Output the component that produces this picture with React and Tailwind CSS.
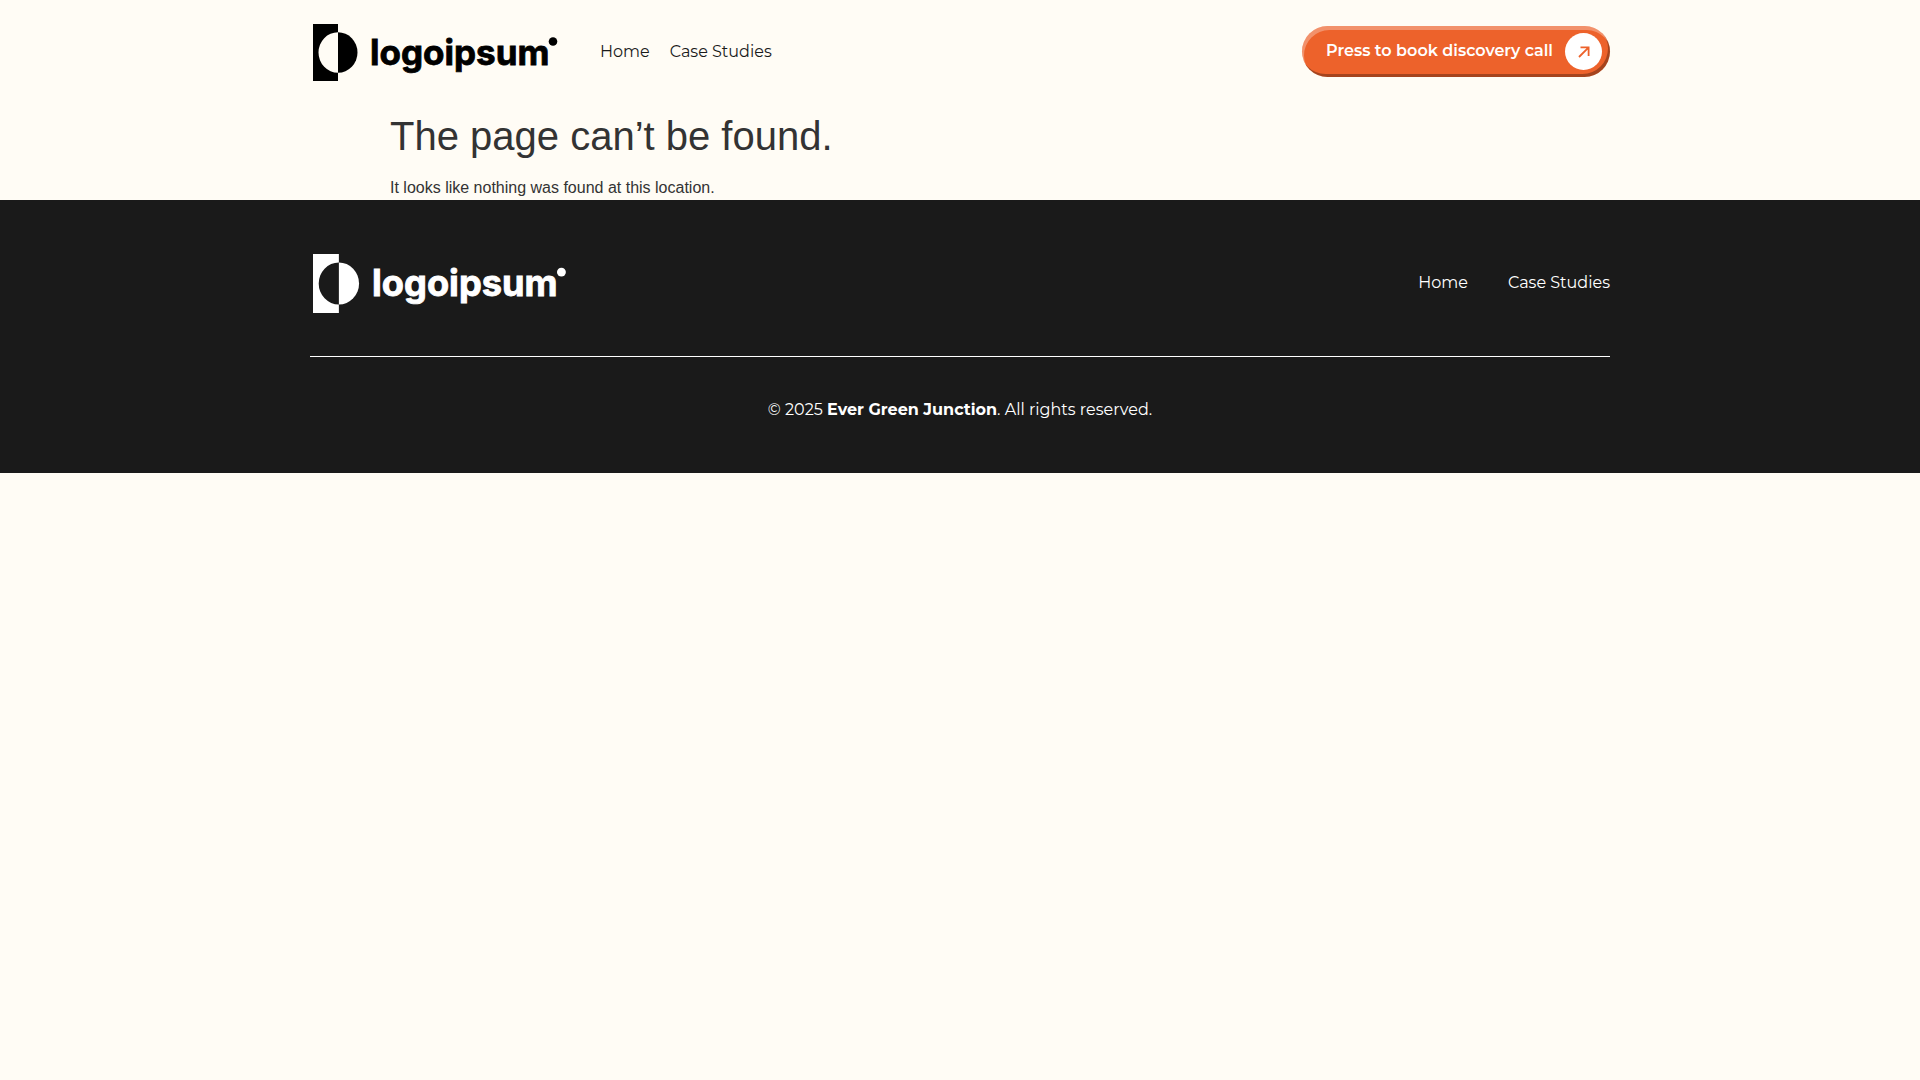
import React from "react";

const links = [
  { name: "Home", href: "/" },
  { name: "Case Studies", href: "/case-studies" },
];

const Logo = ({ className }) => (
  <svg viewBox="0 0 245 57" fill="currentColor" className={className} role="img" aria-label="logoipsum">
    <path d="M0 0H25V8.2A19.5 20.3 0 0 0 25 48.8V57H0Z" />
    <path d="M25 8.2A19.5 20.3 0 0 1 25 48.8Z" />
    <text
      x="57"
      y="41"
      fontSize="35"
      fontWeight="700"
      stroke="currentColor"
      strokeWidth="0.8"
      className="font-['Inter',sans-serif]"
    >
      logoipsum
    </text>
    <circle cx="240" cy="17.5" r="4.3" />
  </svg>
);

const ArrowIcon = () => (
  <svg
    viewBox="0 0 12 12"
    fill="none"
    stroke="currentColor"
    strokeWidth="1.8"
    className="h-3 w-3"
    aria-hidden="true"
  >
    <path d="M2.5 1.4H10.6V10M10.4 1.6L1 11" />
  </svg>
);

const Header = () => (
  <header className="px-5 pt-[22px] pb-[23px]">
    <div className="mx-auto flex max-w-[1300px] flex-wrap items-center gap-10">
      <a href="/" className="pt-0.5 pr-0.5 pl-[3px]">
        <Logo className="h-[57px] w-auto text-black" />
      </a>
      <nav className="flex gap-5" aria-label="Main">
        {links.map((link) => (
          <a key={link.name} href={link.href} className="text-base">
            {link.name}
          </a>
        ))}
      </nav>
      <button
        type="button"
        className="ml-auto flex items-center gap-3 rounded-full bg-[#ed622b] py-[7px] pr-2 pl-6 text-base font-semibold text-white shadow-[inset_2px_4px_0_rgba(255,255,255,0.3),inset_-2px_-3px_0_rgba(0,0,0,0.3)]"
      >
        <span className="pb-0.5">Press to book discovery call</span>
        <span className="flex h-[37px] w-[37px] items-center justify-center rounded-full bg-white text-[#ed622b]">
          <ArrowIcon />
        </span>
      </button>
    </div>
  </header>
);

const Footer = () => (
  <footer className="bg-[#1a1a1a] px-5 text-white">
    <div className="mx-auto max-w-[1300px]">
      <div className="flex flex-wrap items-center justify-between border-b border-white pt-[52px] pb-[43px]">
        <a href="/" className="pt-0.5 pl-[3px]">
          <Logo className="h-[59px] w-auto" />
        </a>
        <nav className="flex gap-10" aria-label="Footer">
          {links.map((link) => (
            <a key={link.name} href={link.href} className="text-base">
              {link.name}
            </a>
          ))}
        </nav>
      </div>
      <p className="pt-[41px] pb-[51px] text-center text-base">
        © 2025 <strong className="font-bold">Ever Green Junction</strong>. All rights reserved.
      </p>
    </div>
  </footer>
);

const App = () => {
  return (
    <div className="min-h-screen bg-[#fffcf5] font-['Montserrat','Inter',sans-serif] text-[#1a1a1a]">
      <Header />
      <main className="mx-auto max-w-[1140px] font-['Liberation_Sans',Arial,sans-serif] text-[#333333]">
        <h1 className="pt-2 pb-4 text-[40px] leading-12">The page can’t be found.</h1>
        <p className="text-base">It looks like nothing was found at this location.</p>
      </main>
      <Footer />
    </div>
  );
};

export default App;
